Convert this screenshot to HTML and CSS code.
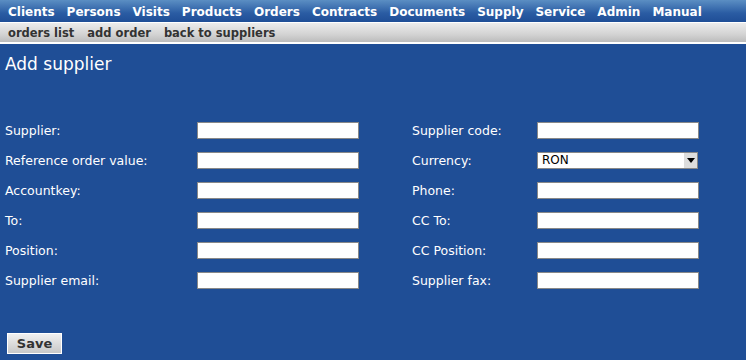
FILE: index.html
```html
<!DOCTYPE html>
<html lang="en">
<head>
    <meta charset="UTF-8">
    <title>Add supplier</title>
    <link rel="stylesheet" href="styles.css">
</head>
<body>

    <!-- Main menu -->
    <div class="menu">
        <a href="#">Clients</a>
        <a href="#">Persons</a>
        <a href="#">Visits</a>
        <a href="#">Products</a>
        <a href="#">Orders</a>
        <a href="#">Contracts</a>
        <a href="#">Documents</a>
        <a href="#">Supply</a>
        <a href="#">Service</a>
        <a href="#">Admin</a>
        <a href="#">Manual</a>
    </div>

    <!-- Sub menu -->
    <div class="submenu">
        <a href="#">orders list</a>
        <a href="#">add order</a>
        <a href="#">back to suppliers</a>
    </div>

    <div class="content">
        <h1>Add supplier</h1>

        <form class="supplier-form">
            <label>Supplier:</label>
            <input type="text">
            <label>Supplier code:</label>
            <input type="text">

            <label>Reference order value:</label>
            <input type="text">
            <label>Currency:</label>
            <div class="select">
                <span>RON</span>
                <span class="arrow"></span>
            </div>

            <label>Accountkey:</label>
            <input type="text">
            <label>Phone:</label>
            <input type="text">

            <label>To:</label>
            <input type="text">
            <label>CC To:</label>
            <input type="text">

            <label>Position:</label>
            <input type="text">
            <label>CC Position:</label>
            <input type="text">

            <label>Supplier email:</label>
            <input type="text">
            <label>Supplier fax:</label>
            <input type="text">
        </form>

        <button class="save">Save</button>
    </div>

</body>
</html>
```

FILE: styles.css
```css
* {
    box-sizing: border-box;
    margin: 0;
    padding: 0;
}
body {
    background-color: #1f4e96;
    font-family: "DejaVu Sans", Verdana, sans-serif;
    color: #fff;
    width: 746px;
    height: 360px;
    overflow: hidden;
}
/* Top menu */
.menu {
    display: flex;
    height: 23px;
    padding: 1px 0 0 8px;
    align-items: center;
    background: linear-gradient(#5b8ec3, #2a5ca3 60%, #1f4e96);
    border-bottom: 1px solid #fff;
}
.menu a {
    color: #fff;
    text-decoration: none;
    font-weight: bold;
    font-size: 12px;
    margin-right: 12px;
}
.submenu {
    display: flex;
    height: 21px;
    padding-left: 8px;
    align-items: center;
    background: linear-gradient(#ececec, #d3d3d3 60%, #bcbcbc);
    border-bottom: 2px solid #fff;
}
.submenu a {
    color: #333;
    text-decoration: none;
    font-weight: bold;
    font-size: 11.5px;
    margin-right: 13px;
}
.content {
    padding: 10px 0 0 5px;
}
h1 {
    font-size: 17px;
    font-weight: normal;
    height: 61px;
}
.supplier-form {
    display: grid;
    grid-template-columns: 192px 162px 53px 125px 162px;
    grid-auto-rows: 30px;
    align-items: center;
    font-size: 12.5px;
}
.supplier-form label:nth-of-type(even) {
    grid-column: 4;
}
.supplier-form input,
.select {
    width: 162px;
    height: 17px;
    border: 1px solid #888;
    background: #fff;
    font-size: 12px;
}
.select {
    display: flex;
    justify-content: space-between;
    color: #000;
    width: 161px;
    padding-left: 4px;
}
.select span {
    line-height: 15px;
}
.arrow {
    width: 14px;
    height: 15px;
    background: #ddd;
    border-left: 1px solid #fff;
    position: relative;
}
.arrow::after {
    content: "";
    position: absolute;
    left: 3px;
    top: 5px;
    border-left: 4px solid transparent;
    border-right: 4px solid transparent;
    border-top: 5px solid #000;
}
.save {
    margin: 38px 0 0 2px;
    width: 55px;
    height: 21px;
    border: 1px solid #fff;
    background: linear-gradient(#f0f0f0, #c8c8c8);
    color: #333;
    font-family: "DejaVu Sans", Verdana, sans-serif;
    font-weight: bold;
    font-size: 13px;
}
```
